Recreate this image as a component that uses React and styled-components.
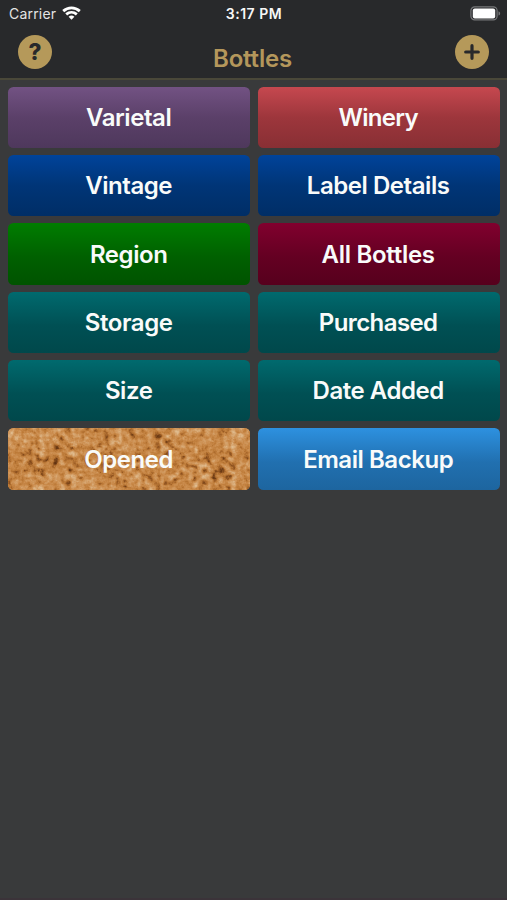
import React from "react";
import styled, { createGlobalStyle } from "styled-components";

const GlobalStyle = createGlobalStyle`
  * { box-sizing: border-box; }
  body { margin: 0; background: #393a3b; }
`;

const Screen = styled.main`
  display: flex;
  flex-direction: column;
  width: 507px;
  height: 900px;
  overflow: hidden;
  background: #393a3b;
  border-bottom: 2px solid #3b3339;
  font-family: Inter, "Liberation Sans", sans-serif;
`;

const Header = styled.header`
  height: 80px;
  background: #28292b;
  border-bottom: 2px solid #4a4839;
`;

const StatusBar = styled.div`
  display: grid;
  grid-template-columns: 1fr auto 1fr;
  align-items: center;
  height: 27px;
  padding: 0 7px 0 9px;
  color: #f7f7f7;
  font-size: 14px;
  line-height: 27px;
`;

const Carrier = styled.div`
  display: flex;
  align-items: center;
  gap: 6px;
  color: #e4e4e4;
  letter-spacing: 0.2px;
  svg { margin-top: -1px; }
`;

const Time = styled.time`
  margin-left: -1px;
  font-weight: 600;
  font-size: 14px;
  letter-spacing: 0.5px;
`;

const BatterySlot = styled.div`
  display: flex;
  justify-content: flex-end;
  margin-right: -1px;
`;

const NavBar = styled.nav`
  display: flex;
  justify-content: space-between;
  height: 50px;
  padding: 8px 18px 0;
`;

const Title = styled.h1`
  margin: 8px 2px 0 0;
  color: #b4975b;
  font-size: 24px;
  font-weight: 600;
  line-height: 32px;
  letter-spacing: -0.2px;
`;

const RoundButton = styled.button`
  width: 34px;
  height: 34px;
  padding: 0;
  border: 0;
  border-radius: 50%;
  background: #b5995a;
  color: #28292b;
  font: 800 22.5px/34px Inter, sans-serif;
  svg { display: block; }
`;

const Grid = styled.section`
  display: grid;
  grid-template-columns: 1fr 1fr;
  grid-auto-rows: 61.3px;
  gap: 7.1px 7.2px;
  padding: 6.5px 7.2px 0 8px;
`;

const Tile = styled.button`
  display: grid;
  place-items: center;
  overflow: hidden;
  padding: 0;
  border: 0;
  border-radius: 5.5px;
  background: linear-gradient(${(p) => p.$colors});
  color: #f9fbfa;
  font-family: inherit;
  > * { grid-area: 1 / 1; }
`;

const Label = styled.span`
  z-index: 1;
  padding: 1.3px 1px 0 0;
  font-size: 24px;
  font-weight: 600;
  line-height: 32px;
  letter-spacing: ${(p) => p.$spacing ?? -0.45}px;
`;

const Texture = styled.svg`
  display: block;
  width: 100%;
  height: 100%;
`;

const blue = "#00439a, #003577 50%, #002e66";
const teal = "#006a6e, #005054 55%, #00484b";

const tiles = [
  { name: "Varietal", colors: "#725283, #5b4069 50%, #4e385c" },
  { name: "Winery", colors: "#c6484f, #9d363c 50%, #882f34", spacing: -0.7 },
  { name: "Vintage", colors: blue },
  { name: "Label Details", colors: blue },
  { name: "Region", colors: "#007d00, #006000 55%, #005300" },
  { name: "All Bottles", colors: "#81002e, #640022 55%, #56001d", spacing: -0.3 },
  { name: "Storage", colors: teal },
  { name: "Purchased", colors: teal, spacing: -0.6 },
  { name: "Size", colors: teal },
  { name: "Date Added", colors: teal },
  { name: "Opened", colors: "#c58a4c, #c58a4c", cork: true },
  { name: "Email Backup", colors: "#2d91e0, #2170b0 55%, #1d659f" },
];

function Cork() {
  return (
    <Texture aria-hidden="true">
      <filter id="cork" x="0" y="0" width="100%" height="100%" colorInterpolationFilters="sRGB">
        <feTurbulence type="fractalNoise" baseFrequency="0.157 0.173" numOctaves="4" seed="23" result="fine" />
        <feColorMatrix in="fine" values=".7 .6 .5 0 -.35  .7 .6 .5 0 -.35  .7 .6 .5 0 -.35  0 0 0 0 1" result="grain" />
        <feTurbulence type="fractalNoise" baseFrequency="0.045" numOctaves="2" seed="5" />
        <feColorMatrix values="1 0 0 0 0  1 0 0 0 0  1 0 0 0 0  0 0 0 0 1" result="patches" />
        <feComposite in="grain" in2="patches" operator="arithmetic" k2="1" k3=".4" k4="-.2" />
        <feComponentTransfer>
          <feFuncR type="table" tableValues="0.36 0.45 0.62 0.74 0.79 0.82 0.85 0.88" />
          <feFuncG type="table" tableValues="0.18 0.25 0.37 0.48 0.54 0.6 0.67 0.74" />
          <feFuncB type="table" tableValues="0.06 0.09 0.15 0.22 0.29 0.37 0.47 0.56" />
        </feComponentTransfer>
      </filter>
      <rect width="100%" height="100%" filter="url(#cork)" />
    </Texture>
  );
}

function Wifi() {
  return (
    <svg width="19" height="14" viewBox="0 0 19 14" fill="none" stroke="#fff" strokeWidth="2.8">
      <path d="M1.2 5.1C6 .7 13 .7 17.8 5.1" />
      <path d="M4.2 8.4C7.3 5.7 11.7 5.7 14.8 8.4" />
      <path d="M6.6 10.8Q9.5 8.3 12.4 10.8L9.5 13.8Z" fill="#fff" stroke="none" />
    </svg>
  );
}

function Battery() {
  return (
    <svg width="31" height="15" viewBox="0 0 31 15">
      <rect x=".9" y=".9" width="26.2" height="13" rx="3.8" fill="none" stroke="#77787a" strokeWidth="1.2" />
      <rect x="2.8" y="2.4" width="22.4" height="10" rx="2" fill="#fff" />
      <path d="M28.5 5.2c2.2.8 2.2 3.6 0 4.4z" fill="#77787a" />
    </svg>
  );
}

export default function App() {
  return (
    <>
      <GlobalStyle />
      <Screen>
        <Header>
          <StatusBar>
            <Carrier>Carrier <Wifi /></Carrier>
            <Time>3:17 PM</Time>
            <BatterySlot><Battery /></BatterySlot>
          </StatusBar>
          <NavBar>
            <RoundButton aria-label="Help">?</RoundButton>
            <Title>Bottles</Title>
            <RoundButton aria-label="Add bottle">
              <svg width="34" height="34" viewBox="0 0 34 34" stroke="currentColor" strokeWidth="3.2" strokeLinecap="round">
                <path d="M10.7 17H23.3M17 10.7V23.3" />
              </svg>
            </RoundButton>
          </NavBar>
        </Header>
        <Grid>
          {tiles.map(({ name, colors, cork, spacing }) => (
            <Tile key={name} $colors={colors}>
              {cork && <Cork />}
              <Label $spacing={spacing}>{name}</Label>
            </Tile>
          ))}
        </Grid>
      </Screen>
    </>
  );
}
